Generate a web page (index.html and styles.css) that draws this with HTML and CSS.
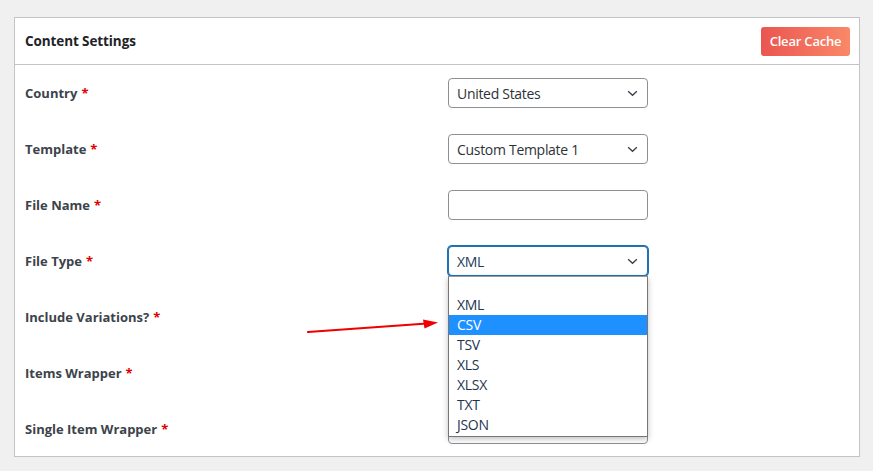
FILE: index.html
```html
<!DOCTYPE html>
<html>
<head>
<meta charset="utf-8">
<link rel="stylesheet" href="styles.css">
</head>
<body>
<div class="panel">
  <div class="panel-head">
    <h2 class="title">Content Settings</h2>
    <button class="btn-clear">Clear Cache</button>
  </div>
  <div class="form">
    <label class="lbl">Country <span class="req">*</span></label>
    <div class="field select"><span>United States</span><svg class="chev" viewBox="0 0 12 8"><path d="M1 1.5 L6 6 L11 1.5" /></svg></div>

    <label class="lbl">Template <span class="req">*</span></label>
    <div class="field select"><span>Custom Template 1</span><svg class="chev" viewBox="0 0 12 8"><path d="M1 1.5 L6 6 L11 1.5" /></svg></div>

    <label class="lbl">File Name <span class="req">*</span></label>
    <div class="field input"></div>

    <label class="lbl">File Type <span class="req">*</span></label>
    <div class="field-wrap">
      <div class="field select focus"><span>XML</span><svg class="chev" viewBox="0 0 12 8"><path d="M1 1.5 L6 6 L11 1.5" /></svg></div>
      <ul class="dropdown">
        <li class="opt blank">&nbsp;</li>
        <li class="opt">XML</li>
        <li class="opt sel">CSV</li>
        <li class="opt">TSV</li>
        <li class="opt">XLS</li>
        <li class="opt">XLSX</li>
        <li class="opt">TXT</li>
        <li class="opt">JSON</li>
      </ul>
    </div>

    <label class="lbl">Include Variations? <span class="req">*</span></label>
    <div class="field select"></div>

    <label class="lbl">Items Wrapper <span class="req">*</span></label>
    <div class="field input"></div>

    <label class="lbl">Single Item Wrapper <span class="req">*</span></label>
    <div class="field input"></div>
  </div>
  <svg class="arrow" width="140" height="20" viewBox="0 0 140 20">
    <path d="M1 15 L120 6.5" stroke="#f00000" stroke-width="2.2" fill="none" stroke-linecap="round"/>
    <path d="M116 2.5 L131 5.5 L117.5 11.5 Z" fill="#f00000"/>
  </svg>
</div>
</body>
</html>
```
FILE: styles.css
```css
html, body {
  margin: 0;
  padding: 0;
  background: #f0f0f1;
}
body {
  font-family: "Open Sans", "Noto Sans", sans-serif;
  padding: 17px 13px 14px 14px;
}
.panel {
  position: relative;
  background: #fff;
  border: 1px solid #c3c4c7;
  width: 844px;
  height: 438px;
  overflow: hidden;
}
.panel-head {
  display: flex;
  align-items: center;
  justify-content: space-between;
  height: 46px;
  border-bottom: 1px solid #c3c4c7;
  padding: 0 9px 0 10px;
}
.title {
  margin: 0;
  font-size: 13.5px;
  font-weight: 700;
  color: #1d2327;
  letter-spacing: -0.1px;
}
.btn-clear {
  border: 0;
  border-radius: 3px;
  height: 29px;
  width: 89px;
  padding: 0;
  background: linear-gradient(90deg, #eb5550 0%, #f98868 100%);
  color: #fff;
  font-family: inherit;
  font-size: 13px;
  font-weight: 600;
  letter-spacing: -0.2px;
}
.form {
  display: grid;
  grid-template-columns: 423px 200px;
  grid-auto-rows: 30px;
  row-gap: 26px;
  padding: 13px 10px 0 10px;
}
.lbl {
  display: flex;
  align-items: center;
  font-size: 13px;
  font-weight: 700;
  color: #3c434a;
  letter-spacing: 0;
}
.req {
  color: #e00000;
  margin-left: 4px;
}
.field {
  box-sizing: border-box;
  height: 30px;
  border: 1px solid #8c8f94;
  border-radius: 4px;
  background: #fff;
}
.select {
  display: flex;
  align-items: center;
  justify-content: space-between;
  padding: 0 8px 0 8px;
  font-size: 14px;
  color: #2c3338;
  letter-spacing: -0.3px;
}
.chev {
  width: 11px;
  height: 7px;
  fill: none;
  stroke: #3c434a;
  stroke-width: 1.6;
  margin-right: 1px;
}
.focus {
  border-color: #2271b1;
  box-shadow: 0 0 0 1px #2271b1;
  color: #1d3a5a;
}
.field-wrap {
  position: relative;
}
.dropdown {
  position: absolute;
  left: 0;
  top: 30px;
  width: 200px;
  box-sizing: border-box;
  margin: 0;
  padding: 0 0 1px 0;
  list-style: none;
  background: #fff;
  border: 1px solid #767676;
  border-top-color: #9a9a9a;
  box-shadow: 0 2px 6px rgba(0,0,0,0.25);
  z-index: 5;
}
.opt {
  height: 20px;
  line-height: 20px;
  padding-left: 8px;
  font-size: 14px;
  color: #1e3550;
  letter-spacing: -0.3px;
}
.opt.blank {
  height: 18px;
}
.opt.sel {
  background: #1e90ff;
  color: #fff;
}
.arrow {
  position: absolute;
  left: 292px;
  top: 299px;
  z-index: 6;
}
```
